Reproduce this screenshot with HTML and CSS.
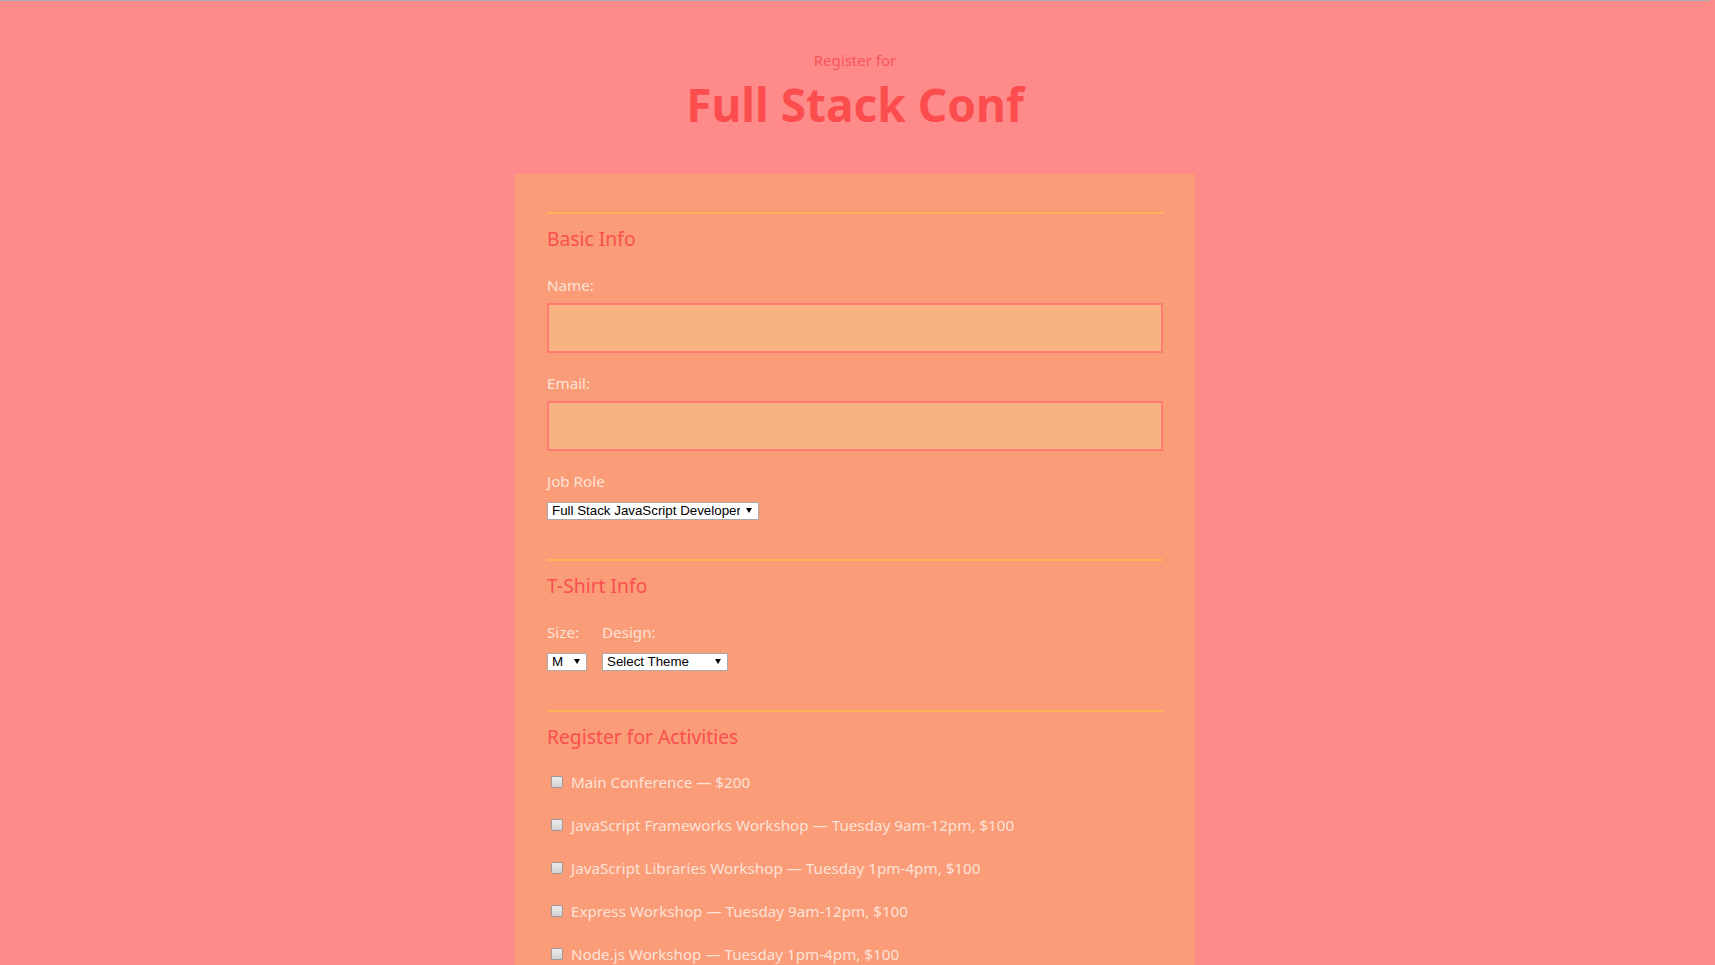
FILE: index.html
```html
<!DOCTYPE html>
<html lang="en">
<head>
<meta charset="utf-8">
<title>Full Stack Conf Registration</title>
<link rel="stylesheet" href="styles.css">
</head>
<body>
<header class="header">
  <span class="header-sub">Register for</span>
  <h1 class="header-title">Full Stack Conf</h1>
</header>
<form class="card">
  <fieldset class="section">
    <h2 class="section-title">Basic Info</h2>
    <label class="label" for="name">Name:</label>
    <input class="text-input" type="text" id="name">
    <label class="label label-next" for="mail">Email:</label>
    <input class="text-input" type="email" id="mail">
    <label class="label label-next" for="title">Job Role</label>
    <span class="select-wrap select-job">
      <select class="select" id="title">
        <option>Full Stack JavaScript Developer</option>
        <option>Front End Developer</option>
        <option>Back End Developer</option>
        <option>Designer</option>
        <option>Student</option>
        <option>Other</option>
      </select>
    </span>
  </fieldset>
  <fieldset class="section">
    <h2 class="section-title">T-Shirt Info</h2>
    <div class="shirt-row">
      <div class="shirt-col">
        <label class="label" for="size">Size:</label>
        <span class="select-wrap select-size">
          <select class="select" id="size">
            <option>S</option>
            <option selected>M</option>
            <option>L</option>
            <option>XL</option>
          </select>
        </span>
      </div>
      <div class="shirt-col">
        <label class="label" for="design">Design:</label>
        <span class="select-wrap select-design">
          <select class="select" id="design">
            <option>Select Theme</option>
            <option>Theme - JS Puns</option>
            <option>Theme - I ♥ JS</option>
          </select>
        </span>
      </div>
    </div>
  </fieldset>
  <fieldset class="section">
    <h2 class="section-title">Register for Activities</h2>
    <div class="activities">
      <label class="activity"><input class="check" type="checkbox" name="all"><span>Main Conference — $200</span></label>
      <label class="activity"><input class="check" type="checkbox" name="js-frameworks"><span>JavaScript Frameworks Workshop — Tuesday 9am-12pm, $100</span></label>
      <label class="activity"><input class="check" type="checkbox" name="js-libs"><span>JavaScript Libraries Workshop — Tuesday 1pm-4pm, $100</span></label>
      <label class="activity"><input class="check" type="checkbox" name="express"><span>Express Workshop — Tuesday 9am-12pm, $100</span></label>
      <label class="activity"><input class="check" type="checkbox" name="node"><span>Node.js Workshop — Tuesday 1pm-4pm, $100</span></label>
      <label class="activity"><input class="check" type="checkbox" name="build-tools"><span>Build tools Workshop — Wednesday 9am-12pm, $100</span></label>
      <label class="activity"><input class="check" type="checkbox" name="npm"><span>npm Workshop — Wednesday 1pm-4pm, $100</span></label>
    </div>
  </fieldset>
</form>
</body>
</html>
```

FILE: styles.css
```css
* {
  box-sizing: border-box;
}

html {
  background: #ff8a8a;
}

body {
  margin: 0 5px 0 0;
  border-top: 1px solid #aab0b4;
  background: #ff8a8a;
  font-family: "Noto Sans", "Open Sans", sans-serif;
  font-size: 15.2px;
  color: #fde2d7;
}

.header {
  display: flex;
  flex-direction: column;
  align-items: center;
  padding-top: 49px;
}

.header-sub {
  display: block;
  font-size: 15px;
  line-height: 20px;
  color: #f65656;
}

.header-title {
  margin: 6px 0 0;
  font-size: 46px;
  line-height: 56px;
  font-weight: 700;
  color: #fb4d4d;
}

.card {
  width: 680px;
  margin: 42px auto 0;
  padding: 38px 32px 60px;
  background: #fa9c78;
  min-height: 900px;
}

.section {
  display: flex;
  flex-direction: column;
  align-items: flex-start;
  margin: 0;
  padding: 0 0 39px;
  border: 0;
  border-top: 2px solid #ffb45c;
  min-width: 0;
}

.section-title {
  margin: 12px 0 0;
  font-size: 19.3px;
  line-height: 26px;
  font-weight: 400;
  color: #fa4f4f;
}

.label {
  display: block;
  margin-top: 23px;
  line-height: 20px;
}

.label-next {
  margin-top: 20px;
}

.text-input {
  display: block;
  width: 100%;
  height: 50px;
  margin-top: 8px;
  border: 2px solid #ff7a72;
  background: #f9b282;
  font: inherit;
  outline: none;
}

.select-wrap {
  position: relative;
  display: inline-block;
  margin-top: 11px;
}

.select-wrap::after {
  content: "";
  position: absolute;
  top: 6px;
  right: 7px;
  border-left: 3px solid transparent;
  border-right: 3px solid transparent;
  border-top: 5px solid #000;
  pointer-events: none;
}

.select {
  display: block;
  appearance: none;
  -webkit-appearance: none;
  height: 18px;
  margin: 0;
  padding: 0 18px 0 4px;
  border: 1px solid #a9a9a9;
  border-radius: 0;
  background: #fff;
  font-family: "Liberation Sans", Arial, sans-serif;
  font-size: 13.33px;
  line-height: 16px;
  color: #000;
}

.select-job .select {
  width: 212px;
}

.select-size .select {
  width: 40px;
}

.select-design .select {
  width: 126px;
}

.shirt-row {
  display: flex;
  gap: 15px;
}

.shirt-col {
  display: flex;
  flex-direction: column;
  align-items: flex-start;
}

.activities {
  display: flex;
  flex-direction: column;
  gap: 23px;
  margin-top: 22px;
}

.activity {
  display: flex;
  align-items: center;
  gap: 8px;
  line-height: 20px;
}

.check {
  appearance: none;
  -webkit-appearance: none;
  width: 12px;
  height: 12px;
  margin: -1px 0 0 4px;
  border: 1px solid #9a9a9a;
  border-radius: 2px;
  background: linear-gradient(#ececec, #d2d2d2);
}
```
